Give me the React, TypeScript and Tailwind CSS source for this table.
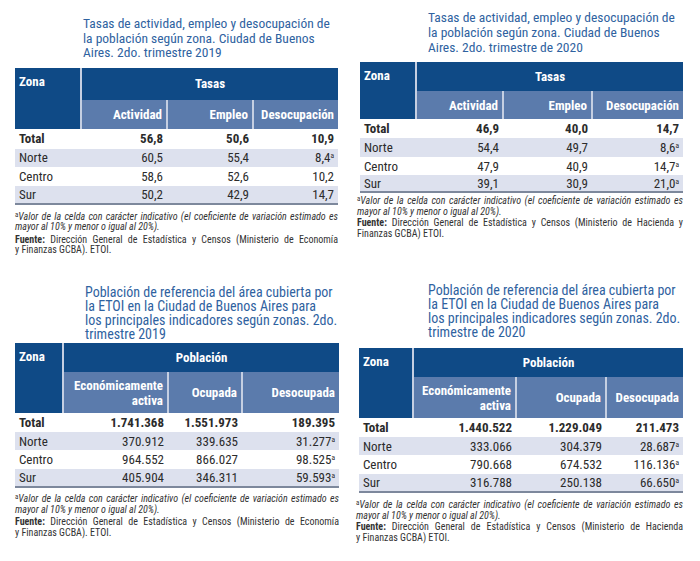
import React from "react";

const FONT = "font-['Liberation_Sans_Narrow','Roboto_Condensed','Liberation_Sans',sans-serif]";

type Cell = { v: string; a?: boolean };
type Row = { zona: string; cells: Cell[] };

type TableProps = {
  group: string;
  cols: React.ReactNode[];
  colW: string[];
  rows: Row[];
  wrap: string;
  h1: string;
  h2: string;
  rowH: string[];
};

function DataTable({ group, cols, colW, rows, wrap, h1, h2, rowH }: TableProps) {
  return (
    <table className={`table-fixed border-collapse ${wrap} border-b-2 border-b-[#7d889c]`}>
      <colgroup>
        {colW.map((w, i) => (
          <col key={i} className={w} />
        ))}
      </colgroup>
      <thead>
        <tr className={h1}>
          <th
            rowSpan={2}
            className="bg-[#0f4a86] text-white text-left align-top font-bold text-[13px] leading-none pl-[4px] pt-[7px] border-r-2 border-r-[#c5cfe2]"
          >
            Zona
          </th>
          <th colSpan={3} className="bg-[#0f4a86] text-white text-center align-middle font-bold text-[13px] leading-none">
            {group}
          </th>
        </tr>
        <tr className={h2}>
          {cols.map((c, i) => (
            <th
              key={i}
              className={`bg-[#5b7bac] text-white text-right align-middle font-bold text-[13px] leading-[15px] pr-[4px] ${
                i > 0 ? "border-l-2 border-l-[#c5cfe2]" : ""
              }`}
            >
              {c}
            </th>
          ))}
        </tr>
      </thead>
      <tbody>
        {rows.map((r, ri) => (
          <tr
            key={ri}
            className={`${rowH[ri]} ${ri % 2 === 1 ? "bg-[#dde1ee]" : "bg-white"} text-[13px] leading-none text-[#2b2b2b] ${
              ri === 0 ? "font-bold" : ""
            }`}
          >
            <td className="pl-[4px] text-left">{r.zona}</td>
            {r.cells.map((c, ci) => (
              <td key={ci} className="pr-[4px] text-right">
                {c.v}
                {c.a ? <sup className="text-[7.5px] leading-none">a</sup> : null}
              </td>
            ))}
          </tr>
        ))}
      </tbody>
    </table>
  );
}

function Notes({ wrap, f1, f2, gap }: { wrap: string; f1: string; f2: string; gap: string }) {
  return (
    <div className={`${wrap} text-[10px] leading-[10.5px] text-[#333]`}>
      <div className="italic text-justify [text-align-last:justify] whitespace-nowrap">
        <span className="not-italic text-[7px] align-top leading-none">a</span>Valor de la celda con carácter indicativo (el coeficiente de variación estimado es
      </div>
      <div className="italic">mayor al 10% y menor o igual al 20%).</div>
      <div className={`${gap} text-justify [text-align-last:justify]`}>
        <span className="font-bold">Fuente:</span> {f1}
      </div>
      <div>{f2}</div>
    </div>
  );
}

const s = (v: string, a?: boolean): Cell => ({ v, a });

export default function App() {
  const econ = (
    <>
      Económicamente
      <br />
      activa
    </>
  );
  return (
    <div className={`w-[700px] h-[561px] bg-white grid grid-cols-2 grid-rows-[260px_301px] overflow-hidden ${FONT}`}>
      {/* top-left */}
      <div className="flex flex-col pt-[16px]">
        <h2 className="ml-[83px] text-[13.5px] leading-[14.5px] text-[#2f62a0] font-normal">
          Tasas de actividad, empleo y desocupación de
          <br />
          la población según zona. Ciudad de Buenos
          <br />
          Aires. 2do. trimestre 2019
        </h2>
        <DataTable
          wrap="ml-[15px] mt-[8px] w-[323px]"
          group="Tasas"
          cols={["Actividad", "Empleo", "Desocupación"]}
          colW={["w-[66px]", "w-[86px]", "w-[86px]", "w-[85px]"]}
          h1="h-[32px]"
          h2="h-[29px]"
          rowH={["h-[20px]", "h-[18px]", "h-[19px]", "h-[18px]"]}
          rows={[
            { zona: "Total", cells: [s("56,8"), s("50,6"), s("10,9")] },
            { zona: "Norte", cells: [s("60,5"), s("55,4"), s("8,4", true)] },
            { zona: "Centro", cells: [s("58,6"), s("52,6"), s("10,2")] },
            { zona: "Sur", cells: [s("50,2"), s("42,9"), s("14,7")] },
          ]}
        />
        <Notes
          wrap="ml-[15px] mt-[7px] w-[323px]"
          f1="Dirección General de Estadística y Censos (Ministerio de Economía"
          f2="y Finanzas GCBA). ETOI."
          gap="mt-[2px]"
        />
      </div>

      {/* top-right */}
      <div className="flex flex-col pt-[10px]">
        <h2 className="ml-[78px] text-[13.5px] leading-[15px] text-[#2f62a0] font-normal">
          Tasas de actividad, empleo y desocupación de
          <br />
          la población según zona. Ciudad de Buenos
          <br />
          Aires. 2do. trimestre de 2020
        </h2>
        <DataTable
          wrap="ml-[10px] mt-[7px] w-[323px]"
          group="Tasas"
          cols={["Actividad", "Empleo", "Desocupación"]}
          colW={["w-[56px]", "w-[87px]", "w-[89px]", "w-[91px]"]}
          h1="h-[29px]"
          h2="h-[28px]"
          rowH={["h-[19px]", "h-[19px]", "h-[18px]", "h-[17px]"]}
          rows={[
            { zona: "Total", cells: [s("46,9"), s("40,0"), s("14,7")] },
            { zona: "Norte", cells: [s("54,4"), s("49,7"), s("8,6", true)] },
            { zona: "Centro", cells: [s("47,9"), s("40,9"), s("14,7", true)] },
            { zona: "Sur", cells: [s("39,1"), s("30,9"), s("21,0", true)] },
          ]}
        />
        <Notes
          wrap="ml-[7px] mt-[3px] w-[326px]"
          f1="Dirección General de Estadística y Censos (Ministerio de Hacienda y"
          f2="Finanzas GCBA) ETOI."
          gap="mt-[1px]"
        />
      </div>

      {/* bottom-left */}
      <div className="flex flex-col pt-[25px]">
        <h2 className="ml-[85px] text-[14px] leading-[14px] text-[#2f62a0] font-normal">
          Población de referencia del área cubierta por
          <br />
          la ETOI en la Ciudad de Buenos Aires para
          <br />
          los principales indicadores según zonas. 2do.
          <br />
          trimestre 2019
        </h2>
        <DataTable
          wrap="ml-[15px] mt-[2px] w-[324px]"
          group="Población"
          cols={[econ, "Ocupada", "Desocupada"]}
          colW={["w-[48px]", "w-[105px]", "w-[74px]", "w-[97px]"]}
          h1="h-[29px]"
          h2="h-[41px]"
          rowH={["h-[19px]", "h-[18px]", "h-[19px]", "h-[18px]"]}
          rows={[
            { zona: "Total", cells: [s("1.741.368"), s("1.551.973"), s("189.395")] },
            { zona: "Norte", cells: [s("370.912"), s("339.635"), s("31.277", true)] },
            { zona: "Centro", cells: [s("964.552"), s("866.027"), s("98.525", true)] },
            { zona: "Sur", cells: [s("405.904"), s("346.311"), s("59.593", true)] },
          ]}
        />
        <Notes
          wrap="ml-[15px] mt-[6px] w-[324px]"
          f1="Dirección General de Estadística y Censos (Ministerio de Economía"
          f2="y Finanzas GCBA). ETOI."
          gap="mt-[2px]"
        />
      </div>

      {/* bottom-right */}
      <div className="flex flex-col pt-[23px]">
        <h2 className="ml-[78px] text-[14px] leading-[14px] text-[#2f62a0] font-normal">
          Población de referencia del área cubierta por
          <br />
          la ETOI en la Ciudad de Buenos Aires para
          <br />
          los principales indicadores según zonas. 2do.
          <br />
          trimestre de 2020
        </h2>
        <DataTable
          wrap="ml-[9px] mt-[9px] w-[324px]"
          group="Población"
          cols={[econ, "Ocupada", "Desocupada"]}
          colW={["w-[54px]", "w-[103px]", "w-[90px]", "w-[77px]"]}
          h1="h-[29px]"
          h2="h-[41px]"
          rowH={["h-[19px]", "h-[18px]", "h-[19px]", "h-[18px]"]}
          rows={[
            { zona: "Total", cells: [s("1.440.522"), s("1.229.049"), s("211.473")] },
            { zona: "Norte", cells: [s("333.066"), s("304.379"), s("28.687", true)] },
            { zona: "Centro", cells: [s("790.668"), s("674.532"), s("116.136", true)] },
            { zona: "Sur", cells: [s("316.788"), s("250.138"), s("66.650", true)] },
          ]}
        />
        <Notes
          wrap="ml-[6px] mt-[7px] w-[327px]"
          f1="Dirección General de Estadística y Censos (Ministerio de Hacienda"
          f2="y Finanzas GCBA) ETOI."
          gap="mt-[1px]"
        />
      </div>
    </div>
  );
}
